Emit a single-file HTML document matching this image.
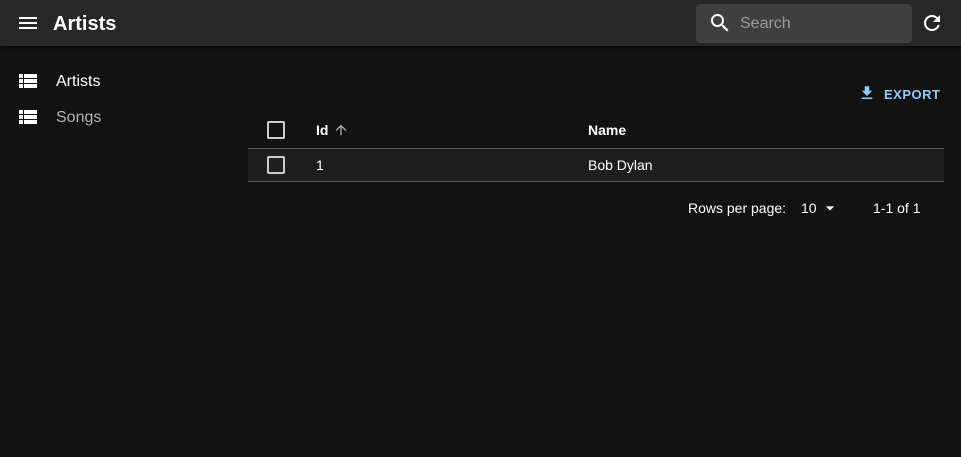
<!DOCTYPE html>
<html><head><style>
*{margin:0;padding:0;box-sizing:border-box}
body{width:961px;height:457px;background:#121212;font-family:"Liberation Sans",Roboto,sans-serif;color:#fff;position:relative;overflow:hidden}
.bar{position:absolute;left:0;top:0;width:961px;height:46px;background:#272727;box-shadow:0 2px 4px rgba(0,0,0,.5)}
.abs{position:absolute}
.t{font-size:14px}
</style></head><body>
<div class="bar">
  <svg class="abs" style="left:16px;top:11px" width="24" height="24" viewBox="0 0 24 24"><path fill="#fff" d="M3 18h18v-2H3v2zm0-5h18v-2H3v2zm0-7v2h18V6H3z"/></svg>
  <div class="abs" style="left:53px;top:13px;font-size:20px;font-weight:bold">Artists</div>
  <div class="abs" style="left:696px;top:4px;width:216px;height:39px;background:#3f3f3f;border-radius:4px"></div>
  <svg class="abs" style="left:708px;top:11px" width="24" height="24" viewBox="0 0 24 24"><path fill="#fff" d="M15.5 14h-.79l-.28-.27A6.470 6.470 0 0 0 16 9.5 6.5 6.5 0 1 0 9.5 16c1.61 0 3.09-.59 4.23-1.57l.27.28v.79l5 4.99L20.490 19l-4.99-5zm-6 0C7.01 14 5 11.99 5 9.5S7.01 5 9.5 5 14 7.01 14 9.5 11.99 14 9.5 14z"/></svg>
  <div class="abs" style="left:740px;top:15px;font-size:16px;color:#9a9a9a">Search</div>
  <svg class="abs" style="left:920px;top:11px" width="24" height="24" viewBox="0 0 24 24"><path fill="#fff" d="M17.65 6.35A7.96 7.96 0 0 0 12 4a8 8 0 1 0 7.73 10h-2.08A6 6 0 1 1 12 6c1.66 0 3.14.69 4.22 1.78L13 11h7V4l-2.35 2.35z"/></svg>
</div>
<svg class="abs" style="left:16px;top:69px" width="24" height="24" viewBox="0 0 24 24"><path fill="#fff" d="M3 14h4v-4H3v4zm0 5h4v-4H3v4zM3 9h4V5H3v4zm5 5h13v-4H8v4zm0 5h13v-4H8v4zM8 5v4h13V5H8z"/></svg>
<div class="abs" style="left:56px;top:73px;font-size:16px">Artists</div>
<svg class="abs" style="left:16px;top:105px" width="24" height="24" viewBox="0 0 24 24"><path fill="#fff" d="M3 14h4v-4H3v4zm0 5h4v-4H3v4zM3 9h4V5H3v4zm5 5h13v-4H8v4zm0 5h13v-4H8v4zM8 5v4h13V5H8z"/></svg>
<div class="abs" style="left:56px;top:109px;font-size:16px;color:#b3b3b3">Songs</div>
<svg class="abs" style="left:858px;top:84px" width="18" height="18" viewBox="0 0 24 24"><path fill="#90caf9" d="M19 9h-4V3H9v6H5l7 7 7-7zM5 18v2h14v-2H5z"/></svg>
<div class="abs" style="left:884px;top:87px;font-size:13px;font-weight:bold;color:#90caf9;letter-spacing:.5px">EXPORT</div>
<div class="abs" style="left:267px;top:121px;width:18px;height:18px;border:2px solid #ccc;border-radius:2px"></div>
<div class="abs t" style="left:316px;top:122px;font-weight:bold">Id</div>
<svg class="abs" style="left:333px;top:122px" width="16" height="16" viewBox="0 0 24 24"><path fill="#aaa" d="M4 12l1.41 1.41L11 7.83V20h2V7.83l5.58 5.59L20 12l-8-8-8 8z"/></svg>
<div class="abs t" style="left:588px;top:122px;font-weight:bold">Name</div>
<div class="abs" style="left:248px;top:148px;width:696px;height:34px;background:#1e1e1e;border-top:1px solid #555;border-bottom:1px solid #555"></div>
<div class="abs" style="left:267px;top:156px;width:18px;height:18px;border:2px solid #ccc;border-radius:2px"></div>
<div class="abs t" style="left:316px;top:157px">1</div>
<div class="abs t" style="left:588px;top:157px">Bob Dylan</div>
<div class="abs t" style="left:688px;top:200px">Rows per page:</div>
<div class="abs t" style="left:801px;top:200px">10</div>
<svg class="abs" style="left:820px;top:198px" width="20" height="20" viewBox="0 0 24 24"><path fill="#fff" d="M7 10l5 5 5-5z"/></svg>
<div class="abs t" style="left:873px;top:200px">1-1 of 1</div>
</body></html>
